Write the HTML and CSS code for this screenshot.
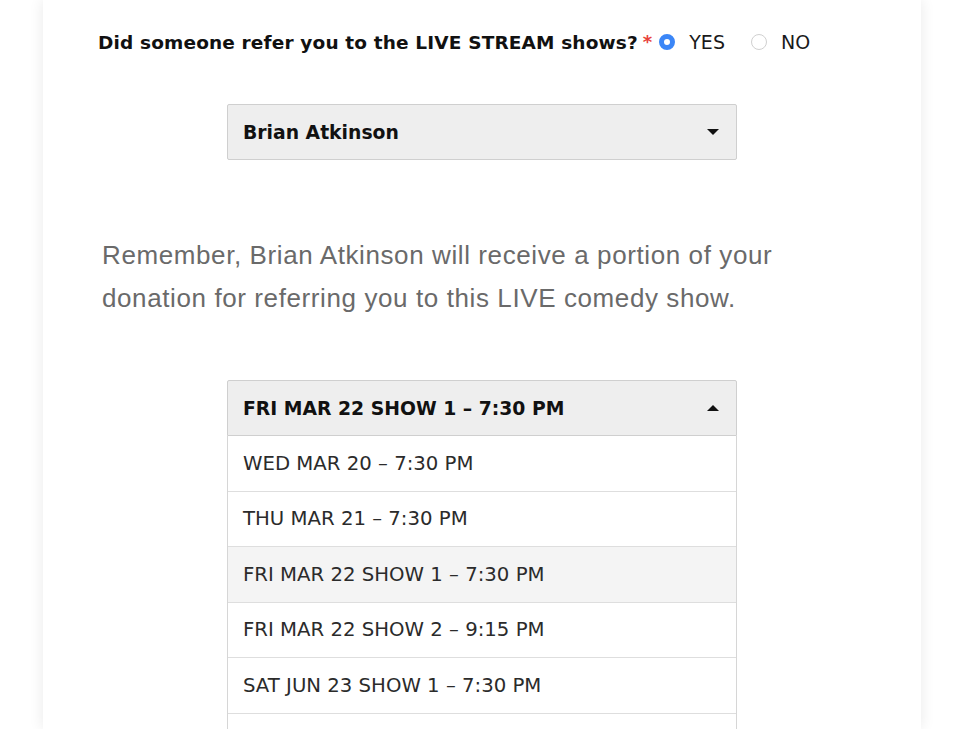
FILE: index.html
```html
<!DOCTYPE html>
<html lang="en">
<head>
<meta charset="utf-8">
<title>Live Stream Referral</title>
<link rel="stylesheet" href="styles.css">
</head>
<body>
<div class="card">
  <div class="question">
    <span class="q-label">Did someone refer you to the LIVE STREAM shows?</span>
    <span class="req">*</span>
    <label class="radio-opt"><span class="radio checked"></span><span class="radio-text">YES</span></label>
    <label class="radio-opt"><span class="radio"></span><span class="radio-text">NO</span></label>
  </div>

  <div class="select">
    <span class="select-value">Brian Atkinson</span>
    <span class="caret down"></span>
  </div>

  <p class="note">Remember, Brian Atkinson will receive a portion of your donation for referring you to this LIVE comedy show.</p>

  <div class="dropdown">
    <div class="select open">
      <span class="select-value">FRI MAR 22 SHOW 1 – 7:30 PM</span>
      <span class="caret up"></span>
    </div>
    <ul class="options">
      <li class="option">WED MAR 20 – 7:30 PM</li>
      <li class="option">THU MAR 21 – 7:30 PM</li>
      <li class="option active">FRI MAR 22 SHOW 1 – 7:30 PM</li>
      <li class="option">FRI MAR 22 SHOW 2 – 9:15 PM</li>
      <li class="option">SAT JUN 23 SHOW 1 – 7:30 PM</li>
      <li class="option">SAT JUN 23 SHOW 2 – 9:15 PM</li>
    </ul>
  </div>
</div>
</body>
</html>
```

FILE: styles.css
```css
html, body {
  margin: 0;
  padding: 0;
  background: #ffffff;
  height: 729px;
  overflow: hidden;
}

.card {
  margin-left: 43px;
  width: 878px;
  height: 729px;
  overflow: hidden;
  background: #ffffff;
  box-shadow: 0 0 14px rgba(0, 0, 0, 0.09);
  font-family: "DejaVu Sans", "Lucida Grande", sans-serif;
  color: #111111;
}

.question {
  display: flex;
  align-items: center;
  height: 24px;
  padding: 30px 0 0 55px;
}

.q-label {
  font-weight: bold;
  font-size: 18.5px;
  letter-spacing: 0.15px;
  color: #111111;
  white-space: nowrap;
}

.req {
  color: #e8413b;
  font-size: 18px;
  font-weight: bold;
  margin-left: 5px;
  position: relative;
  top: -1px;
}

.radio-opt {
  display: flex;
  align-items: center;
}

.radio-opt + .radio-opt {
  margin-left: 26px;
}

.req + .radio-opt {
  margin-left: 7px;
}

.radio {
  width: 16px;
  height: 16px;
  box-sizing: border-box;
  border-radius: 50%;
  border: 1px solid #d0d0d0;
  background: #ffffff;
}

.radio.checked {
  border: 5px solid #3b86f7;
  background: #ffffff;
}

.radio-text {
  margin-left: 14px;
  font-size: 19px;
  color: #1a1a1a;
}

.select {
  box-sizing: border-box;
  width: 510px;
  height: 56px;
  margin: 50px auto 0;
  padding: 0 17px 0 15px;
  display: flex;
  align-items: center;
  justify-content: space-between;
  background: #eeeeee;
  border: 1px solid #cfcfcf;
  border-radius: 2px;
}

.select-value {
  font-weight: bold;
  font-size: 18.8px;
  color: #111111;
}

.caret {
  width: 0;
  height: 0;
  border-left: 6px solid transparent;
  border-right: 6px solid transparent;
}

.caret.down {
  border-top: 6px solid #111111;
}

.caret.up {
  border-bottom: 6px solid #111111;
}

.note {
  margin: 74px 0 0 59px;
  width: 710px;
  font-family: "Liberation Sans", Arial, sans-serif;
  font-size: 26px;
  letter-spacing: 0.6px;
  line-height: 43px;
  color: #6a6a6a;
}

.dropdown {
  width: 510px;
  margin: 60px auto 0;
}

.dropdown .select {
  margin: 0;
  border-radius: 2px 2px 0 0;
}

.options {
  list-style: none;
  margin: 0;
  padding: 0;
  border-left: 1px solid #d6d6d6;
  border-right: 1px solid #d6d6d6;
}

.option {
  height: 54.5px;
  box-sizing: content-box;
  display: flex;
  align-items: center;
  padding-left: 15px;
  border-bottom: 1px solid #dedede;
  font-size: 19.7px;
  color: #2b2b2b;
  background: #ffffff;
}

.option.active {
  background: #f4f4f4;
}
```
